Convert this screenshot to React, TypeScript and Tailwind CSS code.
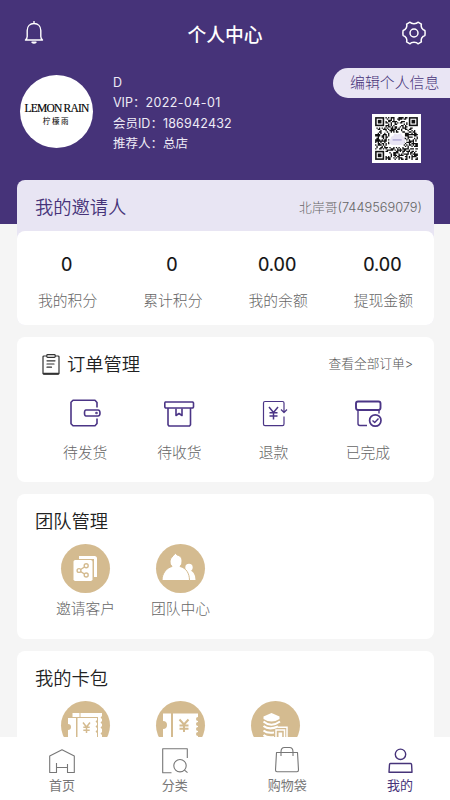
import { JSX, ReactNode } from "react";

type Item = {
    label: string;
    icon: ReactNode;
};

type Stat = {
    label: string;
    value: string;
};

const QR_SIZE = 33;

const inBox = (x: number, y: number, left: number, top: number, size: number) =>
    x >= left && x < left + size && y >= top && y < top + size;

const finders = [
    [0, 0],
    [QR_SIZE - 7, 0],
    [0, QR_SIZE - 7],
];

function buildQrPath(): string {
    let path = "";
    let seed = 20220401;

    for (let y = 0; y < QR_SIZE; y++) {
        for (let x = 0; x < QR_SIZE; x++) {
            seed = (seed * 1103515245 + 12345) % 2147483648;
            const reserved =
                inBox(x, y, 0, 0, 8) ||
                inBox(x, y, QR_SIZE - 8, 0, 8) ||
                inBox(x, y, 0, QR_SIZE - 8, 8) ||
                inBox(x, y, 11, 12, 11);

            if (!reserved && (seed >> 12) % 100 < 54) {
                path += `M${x} ${y}h1v1h-1z`;
            }
        }
    }

    return path;
}

const qrPath = buildQrPath();

function QrCode(): JSX.Element {
    return (
        <svg
            className="size-[49px] bg-white"
            viewBox="-2.4 -2.4 37.8 37.8"
            fill="#111"
        >
            <path d={qrPath} />
            {finders.map(([x, y]) => (
                <g key={`${x}-${y}`}>
                    <rect
                        x={x + 0.6}
                        y={y + 0.6}
                        width="5.8"
                        height="5.8"
                        fill="none"
                        stroke="#111"
                        strokeWidth="1.2"
                    />
                    <rect x={x + 2.1} y={y + 2.1} width="2.8" height="2.8" />
                </g>
            ))}
            <path
                d="M12 16.5q0-2 2-2l1-2 2 1 3-1 1 2q2 .5 2 3v2q-1 2-3 2h-6q-3 0-3-3z"
                fill="#e9e5f5"
            />
            <path d="M13.5 17.6h7" stroke="#a9a2d4" strokeWidth="1" />
        </svg>
    );
}

function BellIcon(): JSX.Element {
    return (
        <svg
            className="size-6"
            viewBox="0 0 24 24"
            fill="none"
            stroke="white"
            strokeWidth="1.4"
            strokeLinecap="round"
            strokeLinejoin="round"
        >
            <path d="M12 .500v2M3.500 19h17c-1.200-1-1.700-2-1.700-3.500V9.500c0-4.200-2.800-7-6.800-7s-6.800 2.800-6.800 7v6c0 1.500-.5 2.500-1.700 3.500z" />
            <path d="M10 21.200c1 1 3 1 4 0z" fill="white" />
        </svg>
    );
}

function GearIcon(): JSX.Element {
    return (
        <svg
            className="size-6"
            viewBox="0 0 24 24"
            fill="none"
            stroke="white"
            strokeWidth="1.5"
            strokeLinejoin="round"
        >
            <path d="M8 1.200C9.300 3.200 14.700 3.200 16 1.200L19.400 3.100C18.600 5.700 20.200 8.900 22.900 9.500Q23.300 12 22.900 14.500C20.200 15.100 18.600 18.300 19.400 20.900L16 22.800C14.700 20.800 9.300 20.800 8 22.800L4.600 20.900C5.400 18.300 3.800 15.100 1.100 14.500Q.7 12 1.100 9.500C3.800 8.900 5.400 5.700 4.600 3.100Z" />
            <circle cx="12" cy="12" r="4" />
        </svg>
    );
}

function ClipboardIcon(): JSX.Element {
    return (
        <svg
            className="h-[21px] w-[18px]"
            viewBox="0 0 18 21"
            fill="none"
            stroke="#333"
            strokeWidth="1.2"
            strokeLinecap="round"
        >
            <path d="M4.500 2H2q-1 0-1 1v16q0 1.200 1 1.200h14q1 0 1-1.200V3q0-1-1-1h-2.500" />
            <rect x="4.800" y=".7" width="8.400" height="2.600" rx=".8" />
            <path d="M5 6.800h8M5 10h7M5 13.200h4.500" />
            <path d="M1.500 19.600h15" strokeWidth="1.600" />
        </svg>
    );
}

const purpleIcon = {
    className: "h-[30px] w-8",
    viewBox: "0 0 32 30",
    fill: "none",
    stroke: "#4b3586",
    strokeWidth: 1.6,
    strokeLinejoin: "round",
} as const;

const orders: Item[] = [
    {
        label: "待发货",
        icon: (
            <svg {...purpleIcon}>
                <path d="M28 9.500V4.500L26 2.300H4L2 4.300V25.700L4 27.700H26L28 25.500V20.500" />
                <path d="M17 12H29Q31 12 31 15T29 18H17Q15.500 18 15.500 15T17 12Z" />
                <circle cx="27.500" cy="15" r=".5" />
            </svg>
        ),
    },
    {
        label: "待收货",
        icon: (
            <svg {...purpleIcon}>
                <path d="M2.200 4H29.800L30.500 5V9L29.800 10H2.500L1.800 9V5Z" />
                <path d="M5 10V26.700L6 28H26.500L27.500 26.700V10M13 10.500V17.500L16 15.500L19 17.500V10.500" />
            </svg>
        ),
    },
    {
        label: "退款",
        icon: (
            <svg {...purpleIcon} strokeWidth={1.2}>
                <path d="M26 14V5Q26 3.500 24.500 3.500H7Q5.500 3.500 5.500 5V26Q5.500 27.700 7 27.700H24.500Q26 27.700 26 26V18.500M23 11.500L26 14.500L29 11.500" />
                <path
                    d="M11 9L15.500 14.500L20 9M15.500 14.500V21.500M11.500 14.800H19.500M11.500 18H19.500"
                    strokeWidth="1.5"
                />
            </svg>
        ),
    },
    {
        label: "已完成",
        icon: (
            <svg {...purpleIcon} strokeWidth={1.9}>
                <path d="M6 3.500H26.500Q28.500 3.500 28.500 5.500V9.500Q28.500 12 26.500 12H6Q4 12 4 9.500V5.500Q4 3.500 6 3.500Z" />
                <path
                    d="M6 12V25.500Q6 27.500 8 27.500H15M27 12V15.500"
                    strokeWidth="1.4"
                />
                <circle cx="23.300" cy="22.500" r="5.700" strokeWidth="1.700" />
                <path
                    d="M20.500 22.500L22.700 24.500L26.500 20.500"
                    strokeWidth="1.400"
                />
            </svg>
        ),
    },
];

const goldIcon = {
    className: "size-[49px] shrink-0 rounded-full bg-[#d4bb90]",
    viewBox: "0 0 49 49",
    fill: "white",
} as const;

const team: Item[] = [
    {
        label: "邀请客户",
        icon: (
            <svg {...goldIcon}>
                <path d="M18 12H33.500Q36 12 36 14.500V33H33V15H18Z" />
                <rect x="12.500" y="16" width="19" height="21" rx="1.800" />
                <g fill="none" stroke="#d4bb90" strokeWidth="1.400">
                    <circle cx="18" cy="26.500" r="1.900" />
                    <circle cx="25.200" cy="21.700" r="2" />
                    <circle cx="25.200" cy="31" r="2" />
                    <path d="M19.700 25.500L23.500 23M19.700 27.700L23.500 30" />
                </g>
            </svg>
        ),
    },
    {
        label: "团队中心",
        icon: (
            <svg {...goldIcon}>
                <circle cx="33" cy="23.500" r="3.700" />
                <path d="M26 36Q26 26 33 26Q39.500 27.500 39.500 36Z" />
                <path
                    d="M6 36.500C6 29 11 23.700 16 22.500A6 6 0 0 1 14 17C14.500 13.500 17 12.500 19.300 9.300L21.500 11.200C25 12 26 14.500 26 17A6 6 0 0 1 24 22.500C30 24 33.500 29 33.500 36.500Z"
                    stroke="#d4bb90"
                />
            </svg>
        ),
    },
];

const cardIcons: ReactNode[] = [
    <svg {...goldIcon} key="coupon">
        <path d="M11.500 12H18.500V16H11.500ZM19.500 12H41V15L39.500 16.500L41 18V20L39.500 21.500L41 23V25L39.500 26.500L41 28V31L39.500 32.500L41 34V38H37V16H19.500Z" />
        <path d="M7 17H15V38H7V29A3 3 0 0 0 7 23ZM16.500 17H36V19L34.500 20.500L36 22V24L34.500 25.500L36 27V29L34.500 30.500L36 32V38H16.500Z" />
        <path
            d="M22 21.500L25.500 26L29 21.500M25.500 26V32M22.300 26.300H28.700M22.300 29.300H28.700"
            fill="none"
            stroke="#d4bb90"
            strokeWidth="1.500"
        />
    </svg>,
    <svg {...goldIcon} key="voucher">
        <path d="M7 12.500H15V38H7V28A4 4 0 0 0 7 20ZM17 12.500H42V16A2 2 0 0 0 42 20V21A2 2 0 0 0 42 25V26A2 2 0 0 0 42 30V31A2 2 0 0 0 42 35V38H17Z" />
        <path
            d="M23.500 18.500L28 23.500L32.500 18.500M28 23.500V31M23.500 24.500H32.500M23.500 27.700H32.500"
            fill="none"
            stroke="#d4bb90"
            strokeWidth="2"
        />
    </svg>,
    <svg {...goldIcon} key="coins">
        <path d="M20.500 12L28.500 15.500V18Q20.500 23 12.500 18V15.500Z" />
        <g fill="none" stroke="white" strokeWidth="2.100">
            <path d="M12.500 20.500Q20 27 29 20.500M12.500 25Q18 29.500 27 25.500M12.500 29.500Q16 32.500 23 31.500M12.500 34Q16 37 23 36" />
            <path d="M27 26.300H36V38" strokeWidth="1.500" />
            <rect
                x="25"
                y="29"
                width="8.500"
                height="11"
                strokeWidth="1.500"
            />
        </g>
        <path d="M27.500 31.500H31.200V37H27.500Z" />
    </svg>,
];

const stats: Stat[] = [
    { label: "我的积分", value: "0" },
    { label: "累计积分", value: "0" },
    { label: "我的余额", value: "0.00" },
    { label: "提现金额", value: "0.00" },
];

const navIcon = {
    className: "h-7 w-[26px]",
    viewBox: "0 0 26 28",
    fill: "none",
    stroke: "currentColor",
    strokeWidth: 1.1,
    strokeLinejoin: "round",
} as const;

const navItems: Item[] = [
    {
        label: "首页",
        icon: (
            <svg {...navIcon}>
                <path d="M7.500 17V26.500H.700V10L13 3.700L25.300 10V26.500H18.500V18M7.500 21.500H18.500" />
            </svg>
        ),
    },
    {
        label: "分类",
        icon: (
            <svg {...navIcon}>
                <path d="M25.300 12V2.700H.700V26.700H9.500" />
                <circle cx="18" cy="19.700" r="6.200" />
                <path d="M22.500 24.200L25.500 26.700" />
            </svg>
        ),
    },
    {
        label: "购物袋",
        icon: (
            <svg {...navIcon}>
                <path d="M2.500 6.500H23.500L24.500 24Q24.500 25.700 23 25.700H3Q1.500 25.700 1.500 24ZM7 10V6Q7 1.500 10.500 1.500H15.500Q19 1.500 19 6V10" />
            </svg>
        ),
    },
    {
        label: "我的",
        icon: (
            <svg {...navIcon} strokeWidth={1.4}>
                <circle cx="13.500" cy="8.300" r="5.200" />
                <path d="M3.500 17.500H23.500Q24.500 17.500 24.600 18.500L25 26.200H2L2.500 18.500Q2.500 17.500 3.500 17.500Z" />
            </svg>
        ),
    },
];

export default function App(): JSX.Element {
    return (
        <div className="flex h-[800px] w-[450px] flex-col overflow-hidden bg-[#f5f5f5] font-[Inter,'Noto_Sans_CJK_SC',sans-serif] whitespace-nowrap">
            <div className="min-h-0 flex-1 overflow-hidden">
                <header className="h-56 bg-[#463379] text-white">
                    <div className="flex h-[68px] items-center justify-between pr-6 pb-0.5 pl-[22px]">
                        <BellIcon />
                        <h1 className="pt-1.5 pl-0.5 text-[18.8px] leading-6 font-medium">
                            个人中心
                        </h1>
                        <GearIcon />
                    </div>

                    <div className="flex items-start">
                        <div className="mt-[7px] ml-5 flex size-[73px] shrink-0 flex-col items-center justify-center rounded-full bg-white pt-1 text-black">
                            <span className="font-['Liberation_Serif',serif] text-[11.5px] leading-[13px] tracking-[-0.8px] [-webkit-text-stroke:0.15px_black]">
                                LEMON RAIN
                            </span>
                            <span className="font-['Noto_Sans_CJK_SC',sans-serif] text-[7.5px] leading-[11px] tracking-[1.6px]">
                                柠檬雨
                            </span>
                        </div>

                        <div className="mt-[5px] ml-5 text-[12.5px] leading-[20.3px] text-[#eeebf6]">
                            <p>D</p>
                            <p>
                                VIP：
                                <span className="tracking-[0.4px]">
                                    2022-04-01
                                </span>
                            </p>
                            <p>
                                会员ID：
                                <span className="tracking-[0.2px]">
                                    186942432
                                </span>
                            </p>
                            <p>推荐人：总店</p>
                        </div>

                        <div className="ml-auto flex flex-col items-end">
                            <button className="h-[30px] w-[117px] rounded-l-full bg-[#e9e5f4] pl-[17px] text-left text-[14.9px] font-light text-[#463379]">
                                编辑个人信息
                            </button>
                            <div className="mt-4 mr-[29px]">
                                <QrCode />
                            </div>
                        </div>
                    </div>
                </header>

                <main className="relative -mt-11 flex flex-col gap-3 pr-4 pl-[17px]">
                    <section className="rounded-lg bg-[#e8e5f3]">
                        <div className="flex h-[51px] items-center justify-between pt-1 pr-3 pl-[18px]">
                            <h2 className="text-[18.3px] font-[350] text-[#463379]">
                                我的邀请人
                            </h2>
                            <span className="text-[12.8px] font-light text-[#666]">
                                北岸哥(7449569079)
                            </span>
                        </div>
                        <div className="h-[94px] rounded-lg bg-white pt-[22px]">
                            <div className="-mx-0.5 grid grid-cols-4 text-center">
                                {stats.map((stat) => (
                                    <div key={stat.label}>
                                        <p className="pr-0.5 text-[18px] leading-6 text-[#111] [-webkit-text-stroke:0.2px_#111]">
                                            {stat.value}
                                        </p>
                                        <p className="mt-3.5 text-[14.8px] leading-5 font-light text-[#666]">
                                            {stat.label}
                                        </p>
                                    </div>
                                ))}
                            </div>
                        </div>
                    </section>

                    <section className="h-[145px] rounded-lg bg-white">
                        <div className="flex h-[54px] items-center pr-[21px] pl-[25px]">
                            <ClipboardIcon />
                            <h2 className="ml-[7px] pt-0.5 text-[18.3px] font-[350] text-[#222]">
                                订单管理
                            </h2>
                            <span className="ml-auto text-[12.7px] font-light text-[#555]">
                                查看全部订单&gt;
                            </span>
                        </div>
                        <div className="grid grid-cols-4 pt-[7px] pr-[19px] pl-[21px]">
                            {orders.map((order) => (
                                <div
                                    key={order.label}
                                    className="flex flex-col items-center"
                                >
                                    {order.icon}
                                    <span className="mt-[15px] text-[14.8px] leading-5 font-light text-[#666]">
                                        {order.label}
                                    </span>
                                </div>
                            ))}
                        </div>
                    </section>

                    <section className="h-[145px] rounded-lg bg-white">
                        <h2 className="h-[50px] pl-[18px] text-[18.3px] leading-[54px] font-[350] text-[#222]">
                            团队管理
                        </h2>
                        <div className="flex pl-[21px]">
                            {team.map((item) => (
                                <div
                                    key={item.label}
                                    className="flex w-[95px] flex-col items-center"
                                >
                                    {item.icon}
                                    <span className="mt-1.5 text-[14.8px] leading-5 font-light text-[#666]">
                                        {item.label}
                                    </span>
                                </div>
                            ))}
                        </div>
                    </section>

                    <section className="h-[145px] rounded-lg bg-white">
                        <h2 className="h-[50px] pl-[18px] text-[18.3px] leading-[54px] font-[350] text-[#222]">
                            我的卡包
                        </h2>
                        <div className="flex gap-[46px] pl-11">
                            {cardIcons}
                        </div>
                    </section>
                </main>
            </div>

            <nav className="flex h-[63px] shrink-0 justify-between bg-white pt-[9px] pr-[26px] pl-[38px]">
                {navItems.map((item) => (
                    <div
                        key={item.label}
                        className="flex w-12 flex-col items-center text-[#777] last:text-[#463379]"
                    >
                        {item.icon}
                        <span className="mt-0.5 text-[13px] leading-[18px]">
                            {item.label}
                        </span>
                    </div>
                ))}
            </nav>
        </div>
    );
}
